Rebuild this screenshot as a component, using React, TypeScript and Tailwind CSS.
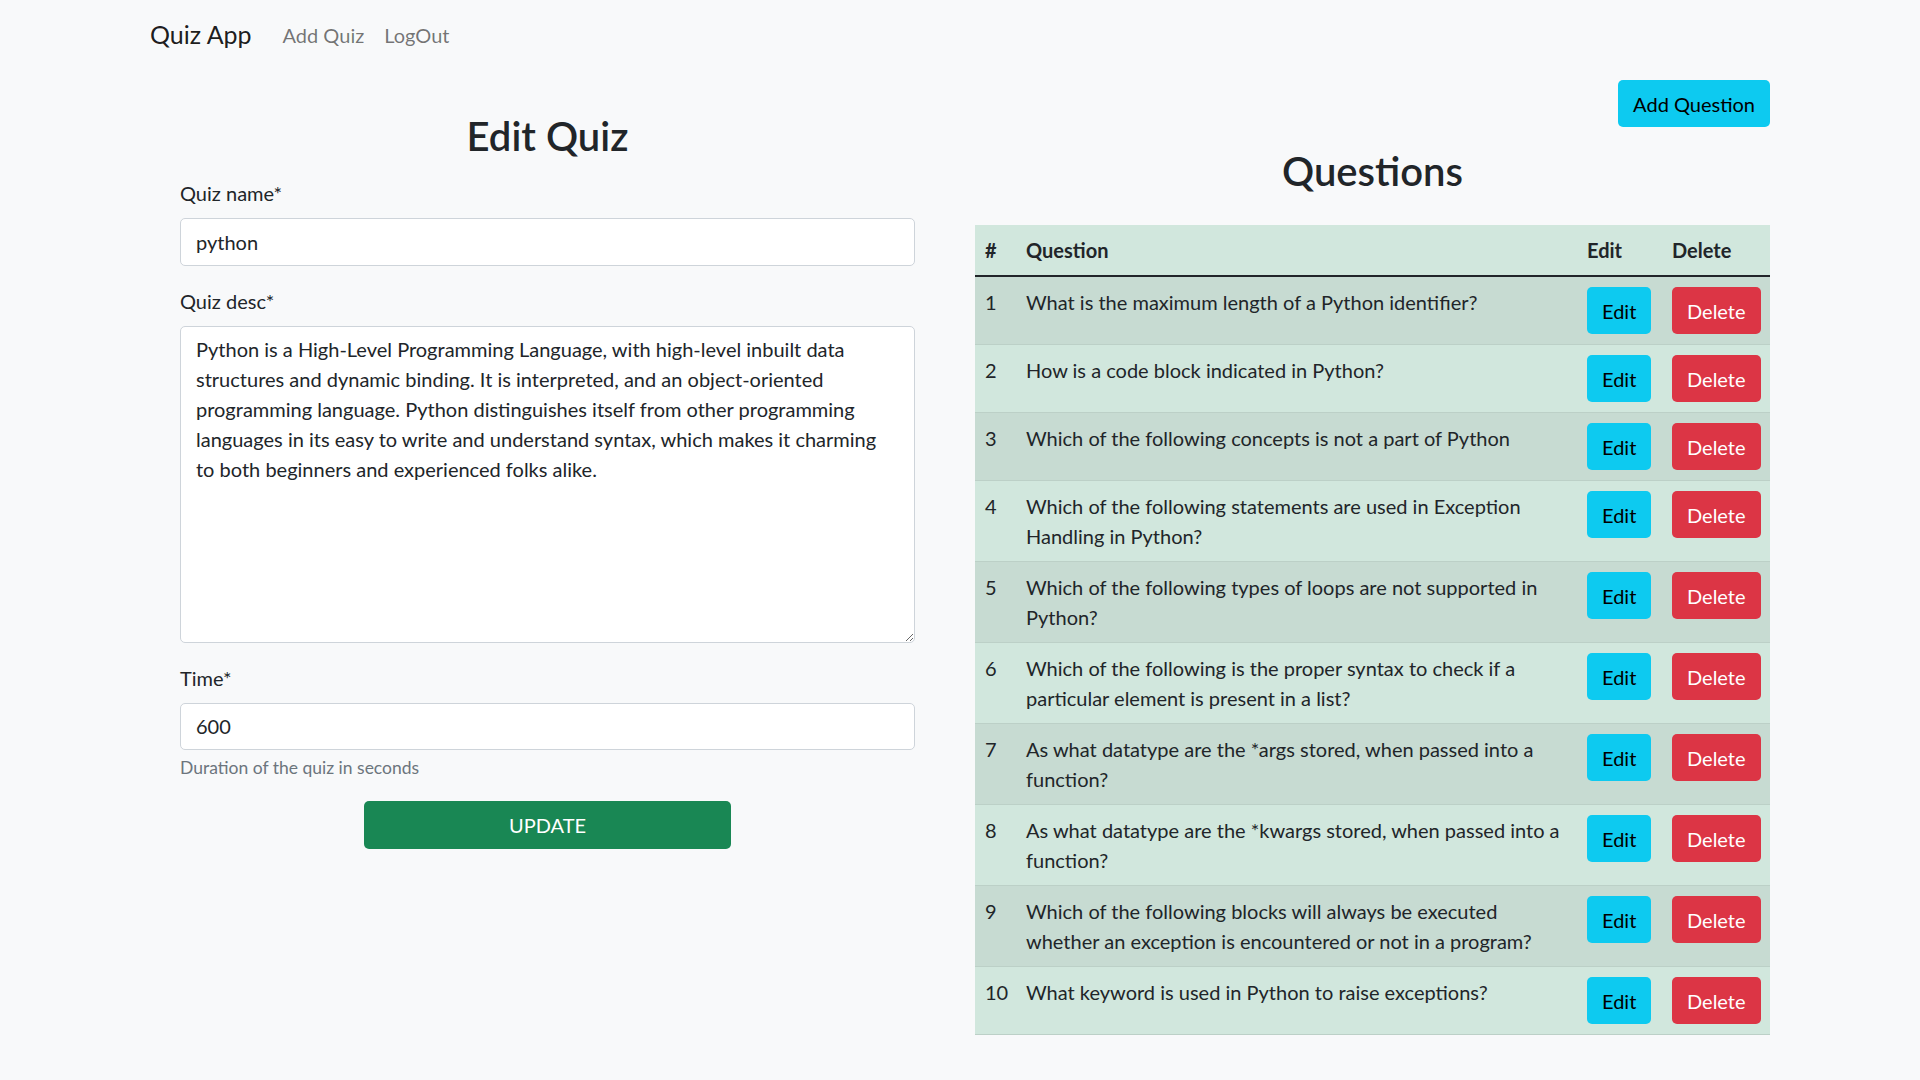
import { FunctionComponent, JSX } from "react";

type Pregunta = { id: number; texto: JSX.Element | string };

const preguntas: Pregunta[] = [
  { id: 1, texto: "What is the maximum length of a Python identifier?" },
  { id: 2, texto: "How is a code block indicated in Python?" },
  { id: 3, texto: "Which of the following concepts is not a part of Python" },
  {
    id: 4,
    texto: (
      <>
        Which of the following statements are used in Exception
        <br />
        Handling in Python?
      </>
    ),
  },
  {
    id: 5,
    texto: (
      <>
        Which of the following types of loops are not supported in
        <br />
        Python?
      </>
    ),
  },
  {
    id: 6,
    texto: (
      <>
        Which of the following is the proper syntax to check if a
        <br />
        particular element is present in a list?
      </>
    ),
  },
  {
    id: 7,
    texto: (
      <>
        As what datatype are the *args stored, when passed into a
        <br />
        function?
      </>
    ),
  },
  {
    id: 8,
    texto: (
      <>
        As what datatype are the *kwargs stored, when passed into a
        <br />
        function?
      </>
    ),
  },
  {
    id: 9,
    texto: (
      <>
        Which of the following blocks will always be executed
        <br />
        whether an exception is encountered or not in a program?
      </>
    ),
  },
  { id: 10, texto: "What keyword is used in Python to raise exceptions?" },
];

const descripcion =
  "Python is a High-Level Programming Language, with high-level inbuilt data\nstructures and dynamic binding. It is interpreted, and an object-oriented\nprogramming language. Python distinguishes itself from other programming\nlanguages in its easy to write and understand syntax, which makes it charming\nto both beginners and experienced folks alike.";

const App: FunctionComponent = (): JSX.Element => {
  return (
    <div className="min-h-screen w-full bg-[#f8f9fa] text-[#212529] font-['Lato',sans-serif] text-[20px] leading-[30px]">
      <nav className="w-full">
        <div className="max-w-[1650px] mx-auto px-[15px] py-[10px] flex items-center">
          <span className="text-[25px] leading-[37.5px] py-[6.25px] mr-[21px] text-black/90 cursor-pointer">
            Quiz App
          </span>
          <span className="px-[10px] py-[10px] text-black/55 cursor-pointer">Add Quiz</span>
          <span className="px-[10px] py-[10px] text-black/55 cursor-pointer">LogOut</span>
        </div>
      </nav>

      <div className="max-w-[1650px] mx-auto flex">
        <div className="w-1/2 px-[15px]">
          <h2 className="mt-[42px] text-center text-[40px] leading-[48px] font-semibold">Edit Quiz</h2>
          <form className="px-[30px] mt-[18px] flex flex-col">
            <label className="mb-[10px]">Quiz name*</label>
            <input
              defaultValue="python"
              className="w-full h-[47.5px] bg-white border border-[#ced4da] rounded-[5px] px-[15px] text-[20px] outline-none"
            />
            <label className="mt-[20px] mb-[10px]">Quiz desc*</label>
            <textarea
              defaultValue={descripcion}
              wrap="off"
              className="w-full h-[317px] bg-white border border-[#ced4da] rounded-[5px] px-[15px] py-[7.5px] text-[20px] leading-[30px] outline-none overflow-hidden"
            />
            <label className="mt-[20px] mb-[10px]">Time*</label>
            <input
              defaultValue="600"
              className="w-full h-[47.5px] bg-white border border-[#ced4da] rounded-[5px] px-[15px] text-[20px] outline-none"
            />
            <div className="mt-[5px] text-[17.5px] leading-[26.25px] text-[#6c757d]">
              Duration of the quiz in seconds
            </div>
            <button
              type="button"
              className="mt-[20px] self-center w-[367px] h-[47.5px] bg-[#198754] text-white rounded-[5px]"
            >
              UPDATE
            </button>
          </form>
        </div>

        <div className="w-1/2 px-[15px] flex flex-col">
          <button
            type="button"
            className="mt-[10px] self-end h-[47px] px-[15px] bg-[#0dcaf0] text-black rounded-[5px]"
          >
            Add Question
          </button>
          <h2 className="mt-[20px] text-center text-[40px] leading-[48px] font-semibold">Questions</h2>
          <table className="mt-[30px] w-full table-fixed border-collapse bg-[#d1e7dd] text-left">
            <thead>
              <tr className="border-b-2 border-[#212529]">
                <th className="w-[41px] px-[10px] py-[10px] font-bold">#</th>
                <th className="px-[10px] py-[10px] font-bold">Question</th>
                <th className="w-[85px] px-[10px] py-[10px] font-bold">Edit</th>
                <th className="w-[108px] px-[10px] py-[10px] font-bold">Delete</th>
              </tr>
            </thead>
            <tbody>
              {preguntas.map((pregunta: Pregunta, indice: number) => {
                return (
                  <tr
                    key={pregunta.id}
                    className={`border-b border-[#bcd0c7] align-top ${indice % 2 === 0 ? "bg-[#c7dbd2]" : "bg-[#d1e7dd]"}`}
                  >
                    <td className="px-[10px] py-[10px]">{pregunta.id}</td>
                    <td className="px-[10px] py-[10px] whitespace-nowrap">{pregunta.texto}</td>
                    <td className="px-[10px] py-[10px]">
                      <button
                        type="button"
                        className="h-[47px] px-[15px] bg-[#0dcaf0] text-black rounded-[5px]"
                      >
                        Edit
                      </button>
                    </td>
                    <td className="px-[10px] py-[10px]">
                      <button
                        type="button"
                        className="h-[47px] px-[15px] bg-[#dc3545] text-white rounded-[5px]"
                      >
                        Delete
                      </button>
                    </td>
                  </tr>
                );
              })}
            </tbody>
          </table>
        </div>
      </div>
    </div>
  );
};

export default App;
